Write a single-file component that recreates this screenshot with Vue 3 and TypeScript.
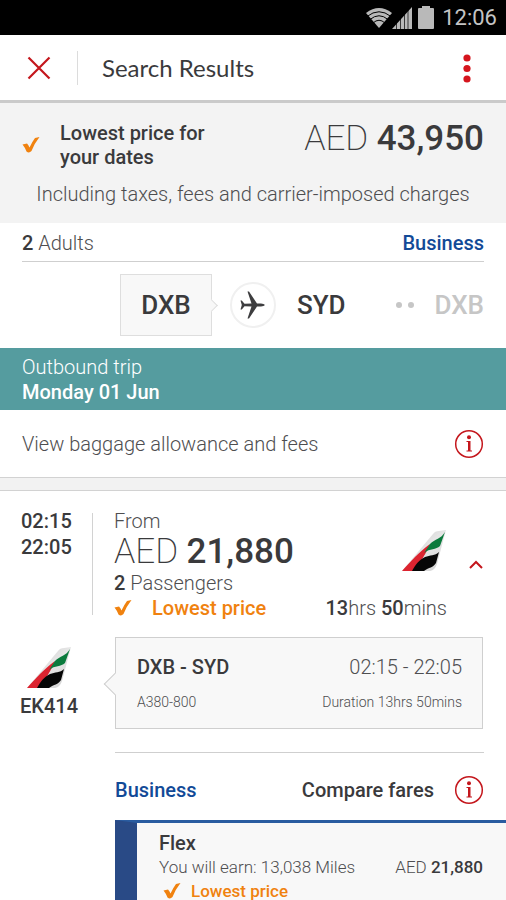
<script setup lang="ts">
import { ref } from 'vue'

interface Price {
  currency: string
  amount: string
}

interface Fare {
  name: string
  miles: string
  price: Price
  lowest: boolean
}

const total: Price = { currency: 'AED', amount: '43,950' }
const flight = {
  departs: '02:15',
  arrives: '22:05',
  price: { currency: 'AED', amount: '21,880' } as Price,
  passengers: 2,
  hours: 13,
  minutes: 50,
  number: 'EK414',
  from: 'DXB',
  to: 'SYD',
  aircraft: 'A380-800',
}
const fares: Fare[] = [
  { name: 'Flex', miles: '13,038', price: { currency: 'AED', amount: '21,880' }, lowest: true },
]
const expanded = ref(true)
</script>

<template>
  <div class="screen">
    <svg class="defs" aria-hidden="true">
      <defs>
        <linearGradient id="fin" x1="0" y1="0" x2="1" y2="1">
          <stop offset="0" stop-color="#c4c4c4" />
          <stop offset="0.5" stop-color="#e6e6e6" />
          <stop offset="1" stop-color="#d0d0d0" />
        </linearGradient>
        <symbol id="tail" viewBox="0 0 44 42">
          <path d="M0 41 L31 4 Q33 1 37 1 L44 0 L35 34 Q33 40 28 41 Z" fill="url(#fin)" />
          <path d="M0 41 C9 31 17 22 28 14 C24 24 19 31 12 41 Z" fill="#dc2430" />
          <path d="M22 23 L28 14 C33 9 39 9 43 2 L38 16 C34 20 28 18 22 23 Z" fill="#0a7a3c" />
          <path d="M10 41 C14 34 17 30 23 27 C28 25 33 26 37 22 L34 33 C31 38 27 37 22 41 Z" fill="#060606" />
        </symbol>
        <symbol id="tick" viewBox="0 0 18 16">
          <path d="M0.500 7.500 L5 6.500 Q6.500 8 7.500 10.500 Q10 5 13 1 L17.500 0 Q12 7 9.500 14 Q7 16.500 4.500 14.500 Q3 10.500 0.500 7.500 Z" fill="#f0820f" />
        </symbol>
        <symbol id="info" viewBox="0 0 30 30">
          <circle cx="15" cy="15" r="13.300" fill="none" stroke="#c4161c" stroke-width="1.500" />
          <circle cx="15" cy="8.300" r="2" fill="#c4161c" />
          <path d="M12.500 12 H16.500 V21.500 H18 V22.500 H12.500 V21.500 H14 V13 H12.500 Z" fill="#c4161c" />
        </symbol>
      </defs>
    </svg>

    <div class="status">
      <svg class="wifi" viewBox="0 0 26 20" aria-hidden="true">
        <path d="M0 5 Q13 -5 26 5 L13 20 Z" fill="#b9b9b9" />
        <path d="M1 8.500 Q13 -1 25 8.500 M4 11.500 Q13 4 22 11.500 M7 15 Q13 9.500 19 15" fill="none" stroke="#000" stroke-width="1" />
      </svg>
      <svg class="signal" viewBox="0 0 20 22" aria-hidden="true">
        <path d="M0 22 L20 0 V22 Z" fill="#b9b9b9" />
        <path d="M4.500 15 V22 M8.500 10 V22 M12.500 6 V22 M16 2 V22" stroke="#000" stroke-width="0.700" />
      </svg>
      <svg class="battery" viewBox="0 0 16 23" aria-hidden="true">
        <path d="M4 0 H12 V2 H15 Q16 2 16 3 V22 Q16 23 15 23 H1 Q0 23 0 22 V3 Q0 2 1 2 H4 Z" fill="#b9b9b9" />
      </svg>
      <span class="clock">12:06</span>
    </div>

    <header class="bar">
      <button class="icon-btn" type="button" aria-label="Close">
        <svg width="24" height="24" viewBox="0 0 24 24"><path d="M1.500 1.500 L22.500 22.500 M22.500 1.500 L1.500 22.500" stroke="#c4161c" stroke-width="2.200" /></svg>
      </button>
      <span class="bar-rule"></span>
      <h1>Search Results</h1>
      <button class="icon-btn more" type="button" aria-label="More options">
        <svg width="8" height="30" viewBox="0 0 8 30" fill="#d5151d"><circle cx="4" cy="5" r="3.600" /><circle cx="4" cy="15.500" r="3.600" /><circle cx="4" cy="26" r="3.600" /></svg>
      </button>
    </header>

    <section class="summary">
      <div class="summary-top">
        <svg class="tick"><use href="#tick" /></svg>
        <p class="lowest-dates">Lowest price for<br />your dates</p>
        <p class="price">{{ total.currency }} <b>{{ total.amount }}</b></p>
      </div>
      <p class="taxes">Including taxes, fees and carrier-imposed charges</p>
    </section>

    <section class="trip">
      <div class="trip-head">
        <span><b>2</b> Adults</span>
        <strong class="cabin">Business</strong>
      </div>
      <div class="route">
        <button class="leg" type="button">DXB</button>
        <span class="plane">
          <svg width="26" height="28" viewBox="0 0 26 28" fill="#3d3d3f"><path d="M25 14 Q24 12.800 21 12.600 L17 12.400 L9 0.500 L7.500 0.500 L11.500 12.400 L4.500 12.800 L1.800 9.500 L0.500 9.500 L1.800 14 L0.500 18.500 L1.800 18.500 L4.500 15.200 L11.500 15.600 L7.500 27.500 L9 27.500 L17 15.600 L21 15.400 Q24 15.200 25 14 Z" /></svg>
        </span>
        <span class="stop">SYD</span>
        <span class="dots"><i></i><i></i></span>
        <span class="stop faded">DXB</span>
      </div>
    </section>

    <section class="outbound">
      <p>Outbound trip</p>
      <h2>Monday 01 Jun</h2>
    </section>

    <a class="baggage" href="#baggage">
      <span>View baggage allowance and fees</span>
      <svg class="info"><use href="#info" /></svg>
    </a>
    <div class="strip"></div>

    <article class="flight">
      <div class="overview">
        <div class="times"><span>{{ flight.departs }}</span><span>{{ flight.arrives }}</span></div>
        <div class="offer">
          <p>From</p>
          <p class="price">{{ flight.price.currency }} <b>{{ flight.price.amount }}</b></p>
          <p><b>{{ flight.passengers }}</b> Passengers</p>
          <p class="lowest"><svg class="tick"><use href="#tick" /></svg>Lowest price</p>
        </div>
        <div class="side">
          <div class="side-top">
            <svg class="tail" role="img" aria-label="Emirates"><use href="#tail" /></svg>
            <button class="icon-btn toggle" type="button" aria-label="Toggle details" :aria-expanded="expanded" @click="expanded = !expanded">
              <svg width="14" height="9" viewBox="0 0 14 9"><path d="M1 8 L7 2 L13 8" fill="none" stroke="#c4161c" stroke-width="2" /></svg>
            </button>
          </div>
          <p class="duration"><b>{{ flight.hours }}</b>hrs <b>{{ flight.minutes }}</b>mins</p>
        </div>
      </div>

      <div v-if="expanded" class="segment">
        <div class="carrier">
          <svg class="tail" role="img" aria-label="Emirates"><use href="#tail" /></svg>
          <span>{{ flight.number }}</span>
        </div>
        <div class="detail">
          <div class="detail-row"><b>{{ flight.from }} - {{ flight.to }}</b><span>{{ flight.departs }} - {{ flight.arrives }}</span></div>
          <div class="detail-row small"><span>{{ flight.aircraft }}</span><span>Duration {{ flight.hours }}hrs {{ flight.minutes }}mins</span></div>
        </div>
      </div>
    </article>

    <section class="fares">
      <div class="fares-head">
        <strong class="cabin">Business</strong>
        <a class="compare" href="#compare">Compare fares<svg class="info"><use href="#info" /></svg></a>
      </div>
      <div v-for="fare in fares" :key="fare.name" class="fare">
        <h3>{{ fare.name }}</h3>
        <div class="fare-row"><span>You will earn: {{ fare.miles }} Miles</span><span>{{ fare.price.currency }} <b>{{ fare.price.amount }}</b></span></div>
        <p v-if="fare.lowest" class="fare-lowest"><svg class="tick"><use href="#tick" /></svg>Lowest price</p>
      </div>
    </section>
  </div>
</template>

<style>
body {
  background: #fff;
}
</style>

<style scoped>
.screen {
  --ink: #3a3a3c;
  display: flex;
  flex-direction: column;
  height: 100vh;
  overflow: hidden;
  background: #fff;
  color: #4e4e50;
  font-family: Roboto, "Liberation Sans", sans-serif;
  font-size: 20px;
  font-weight: 300;
  line-height: 24px;
}
.screen > * {
  flex-shrink: 0;
}
p, h1, h2, h3 {
  margin: 0;
}
b {
  color: var(--ink);
  font-weight: 500;
}
a {
  color: inherit;
  text-decoration: none;
}
button {
  font: inherit;
  color: inherit;
  padding: 0;
  border: 0;
  background: none;
  cursor: pointer;
}
.defs {
  position: absolute;
  width: 0;
  height: 0;
}
.icon-btn {
  display: flex;
}
.tick {
  width: 18px;
  height: 16px;
  flex-shrink: 0;
}
.tail {
  width: 44px;
  height: 42px;
}
.info {
  width: 30px;
  height: 30px;
  flex-shrink: 0;
}
.cabin {
  color: #124a97;
  font-weight: 500;
}
.price {
  color: var(--ink);
  font-size: 35px;
  font-weight: 200;
  line-height: 40px;
  white-space: nowrap;
}
.status {
  display: flex;
  align-items: center;
  justify-content: flex-end;
  height: 35px;
  padding-right: 9px;
  background: #000;
  color: #c4c4c4;
  font-size: 22px;
  font-weight: 400;
}
.wifi {
  width: 26px;
  height: 20px;
}
.signal {
  width: 20px;
  height: 22px;
}
.battery {
  width: 16px;
  height: 23px;
  margin: 0 8px 0 6px;
}
.bar {
  display: flex;
  align-items: center;
  height: 65px;
  padding: 0 35px 0 27px;
  border-bottom: 3px solid #cacaca;
}
.bar-rule {
  width: 1px;
  height: 34px;
  margin: 0 24px 0 26px;
  background: #dcdcdc;
}
h1 {
  color: var(--ink);
  font-family: Lato, sans-serif;
  font-size: 24px;
  font-weight: 400;
}
.more {
  margin-left: auto;
}
.summary {
  height: 120px;
  box-sizing: border-box;
  padding: 16px 22px 0;
  background: #f3f3f3;
}
.summary-top {
  display: flex;
  align-items: flex-start;
}
.summary-top .tick {
  margin: 18px 20px 0 0;
}
.summary-top .price {
  margin-left: auto;
}
.lowest-dates {
  padding-top: 2px;
  color: var(--ink);
  font-weight: 500;
}
.taxes {
  margin-top: 13px;
  text-align: center;
}
.trip {
  padding: 0 22px 12px;
}
.trip-head {
  display: flex;
  justify-content: space-between;
  padding: 8px 0 6px;
  border-bottom: 1px solid #cfcfcf;
}
.route {
  display: flex;
  align-items: center;
  margin: 12px 0 0 98px;
  color: var(--ink);
  font-size: 26px;
  font-weight: 500;
}
.leg {
  position: relative;
  width: 92px;
  height: 62px;
  border: 1px solid #dedede;
  background: #f8f8f8;
}
.leg::after {
  content: "";
  position: absolute;
  top: 26px;
  right: -5px;
  width: 8px;
  height: 8px;
  border: solid #dedede;
  border-width: 1px 1px 0 0;
  background: #f8f8f8;
  transform: rotate(45deg);
}
.plane {
  display: grid;
  place-items: center;
  width: 42px;
  height: 42px;
  margin: 0 21px 0 18px;
  border: 2px solid #f0f0f0;
  border-radius: 50%;
}
.dots {
  display: flex;
  gap: 6px;
  margin: 0 20px 0 auto;
}
.dots i {
  width: 6px;
  height: 6px;
  border-radius: 50%;
  background: #c6c6c6;
}
.faded {
  color: #c6c6c6;
}
.outbound {
  height: 62px;
  box-sizing: border-box;
  padding: 7px 22px 0;
  background: #559c9f;
  color: #fff;
}
h2 {
  font-size: 20px;
  line-height: 26px;
  font-weight: 500;
}
.baggage {
  display: flex;
  align-items: center;
  justify-content: space-between;
  height: 67px;
  padding: 0 22px;
}
.strip {
  height: 12px;
  border: solid #d2d2d2;
  border-width: 1px 0;
  background: #f2f2f2;
}
.flight {
  padding: 17px 23px 0 21px;
}
.overview {
  display: flex;
}
.times {
  display: flex;
  flex-direction: column;
  width: 71px;
  height: 102px;
  margin: 5px 21px 0 0;
  border-right: 1px solid #d2d2d2;
  color: var(--ink);
  font-weight: 500;
  line-height: 26px;
}
.times span {
  margin: -5px 0 5px;
}
.offer {
  padding-top: 1px;
}
.offer .price {
  line-height: 38px;
}
.lowest, .fare-lowest {
  display: flex;
  align-items: center;
  gap: 20px;
  color: #f0820f;
  font-weight: 500;
  line-height: 26px;
}
.side {
  flex: 1;
  display: flex;
  flex-direction: column;
  padding-top: 22px;
}
.side-top {
  display: flex;
  justify-content: flex-end;
  align-items: center;
  gap: 23px;
}
.toggle {
  padding-top: 26px;
}
.duration {
  margin-top: 24px;
  padding-right: 36px;
  text-align: right;
}
.segment {
  display: flex;
  margin-top: 16px;
}
.carrier {
  display: flex;
  flex-direction: column;
  align-items: center;
  gap: 5px;
  width: 56px;
  margin-right: 38px;
  padding-top: 10px;
  color: var(--ink);
  font-weight: 500;
}
.detail {
  position: relative;
  flex: 1;
  height: 92px;
  box-sizing: border-box;
  padding: 17px 20px 0 21px;
  border: 1px solid #cfcfcf;
  background: #f8f8f8;
}
.detail::before {
  content: "";
  position: absolute;
  top: 38px;
  left: -9px;
  width: 15px;
  height: 15px;
  border: solid #cfcfcf;
  border-width: 0 0 1px 1px;
  background: #f8f8f8;
  transform: rotate(45deg);
}
.detail-row {
  display: flex;
  justify-content: space-between;
}
.small {
  margin-top: 11px;
  font-size: 14px;
}
.fares {
  display: flex;
  flex-direction: column;
  margin: 23px 0 0 115px;
}
.fares-head {
  display: flex;
  align-items: center;
  justify-content: space-between;
  height: 60px;
  margin-right: 22px;
  padding-top: 7px;
  border-top: 1px solid #cfcfcf;
}
.compare {
  display: flex;
  align-items: center;
  gap: 20px;
  color: var(--ink);
  font-weight: 500;
}
.fare {
  height: 130px;
  padding: 8px 23px 0 22px;
  border-top: 3px solid #2a5ca0;
  border-left: 22px solid #294a86;
  background: #f8f8f8;
}
h3 {
  color: var(--ink);
  font-size: 20px;
  font-weight: 500;
}
.fare-row {
  display: flex;
  justify-content: space-between;
  font-size: 17px;
}
.fare-lowest {
  gap: 10px;
  padding-left: 4px;
  font-size: 17px;
  line-height: 24px;
}
</style>
